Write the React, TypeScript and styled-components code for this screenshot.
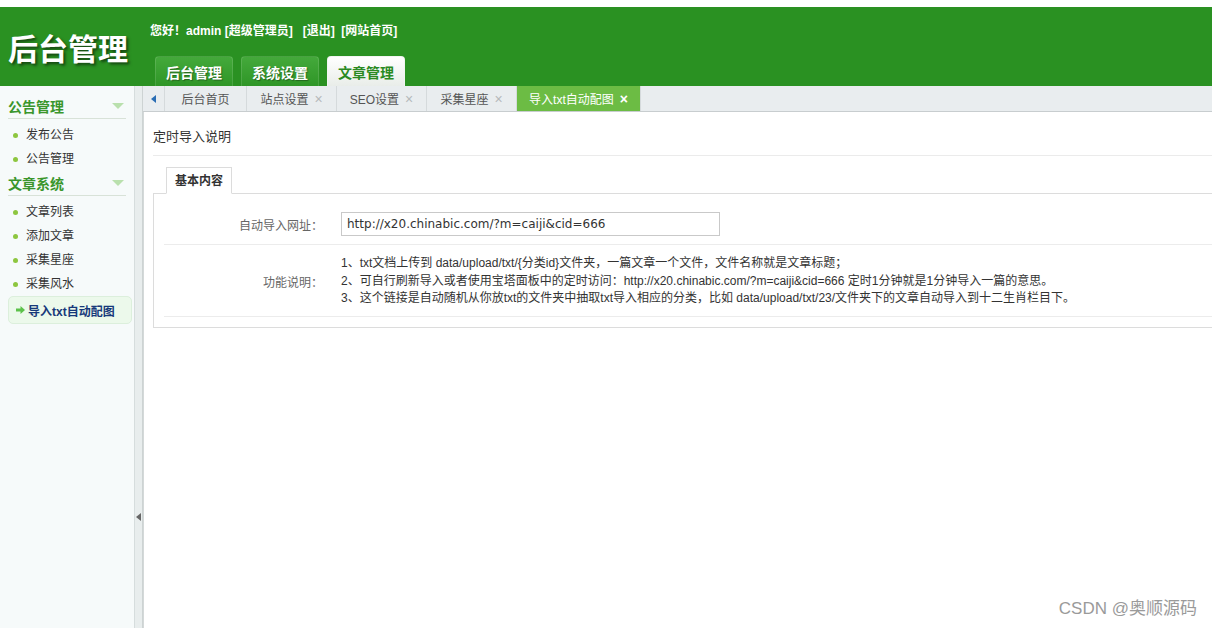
import React, { ReactElement } from "react";
import styled, { createGlobalStyle } from "styled-components";

const GlobalStyle = createGlobalStyle`
  html, body {
    margin: 0;
    padding: 0;
    height: 100%;
    overflow: hidden;
    font-family: "Liberation Sans", "Noto Sans CJK SC", sans-serif;
    font-size: 12px;
    color: #333;
  }
  * { box-sizing: border-box; }
`;

const Page = styled.div`
  height: 628px;
  padding-top: 7px;
  display: flex;
  flex-direction: column;
  background: #fff;
  position: relative;
`;

const Header = styled.div`
  height: 79px;
  background: #2a9122;
  display: flex;
  flex-shrink: 0;
`;

const Logo = styled.div`
  width: 150px;
  padding-left: 8px;
  display: flex;
  align-items: center;
  color: #fff;
  font-family: "Noto Sans CJK SC", sans-serif;
  font-weight: 700;
  font-size: 30px;
  text-shadow: 2px 2px 3px rgba(0, 0, 0, 0.55);
`;

const HeaderRight = styled.div`
  display: flex;
  flex-direction: column;
  justify-content: space-between;
`;

const Greeting = styled.div`
  padding-top: 17px;
  line-height: 14px;
  color: #fff;
  font-weight: 700;
  font-size: 12px;
  white-space: pre;
`;

const NavTabs = styled.div`
  display: flex;
  gap: 8px;
  padding-left: 5px;
`;

const NavTab = styled.div<{ active?: boolean }>`
  width: 78px;
  height: 30px;
  line-height: 31px;
  text-align: center;
  font-family: "Noto Sans CJK SC", sans-serif;
  font-weight: 700;
  font-size: 14px;
  border-radius: 4px 4px 0 0;
  color: ${({ active }) => (active ? "#2a8a22" : "#fff")};
  background: ${({ active }) =>
    active
      ? "linear-gradient(#ffffff, #e9ede9)"
      : "linear-gradient(#44a93b, #2f9627)"};
  border: 1px solid
    ${({ active }) => (active ? "#f2f5f2" : "rgba(255,255,255,0.12)")};
  border-bottom: none;
  text-shadow: ${({ active }) =>
    active ? "none" : "1px 1px 1px rgba(0,0,0,0.35)"};
`;

const Body = styled.div`
  flex: 1;
  display: flex;
  min-height: 0;
`;

const Sidebar = styled.div`
  width: 134px;
  background: #f6fafa;
  padding-top: 8px;
  flex-shrink: 0;
`;

const GroupTitle = styled.div`
  margin: 0 8px;
  height: 25px;
  line-height: 24px;
  border-bottom: 1px solid #d8e2d8;
  font-family: "Noto Sans CJK SC", sans-serif;
  font-weight: 700;
  font-size: 14px;
  color: #3a962c;
  display: flex;
  justify-content: space-between;
  align-items: center;
  padding-right: 2px;
`;

const DownArrow = styled.span`
  width: 0;
  height: 0;
  border-left: 6px solid transparent;
  border-right: 6px solid transparent;
  border-top: 6px solid #b9e0ad;
`;

const MenuList = styled.div`
  padding-top: 4px;
`;

const MenuItem = styled.div`
  height: 24px;
  line-height: 24px;
  padding-left: 26px;
  position: relative;
  color: #333;
  &::before {
    content: "";
    position: absolute;
    left: 13px;
    top: 10px;
    width: 5px;
    height: 5px;
    border-radius: 50%;
    background: #8dc63f;
  }
`;

const ActiveItem = styled.div`
  margin: 0 2px 0 8px;
  height: 28px;
  border: 1px solid #dcefdc;
  border-radius: 5px;
  background: #ecf9eb;
  display: flex;
  align-items: center;
  gap: 3px;
  padding-left: 7px;
  color: #17397a;
  font-weight: 700;
  font-size: 12px;
`;

const Splitter = styled.div`
  width: 9px;
  background: #e8eded;
  border-left: 1px solid #d6dddd;
  border-right: 1px solid #cdd3d3;
  padding-top: 427px;
  display: flex;
  justify-content: center;
  flex-shrink: 0;
`;

const LeftArrow = styled.span<{ color: string }>`
  width: 0;
  height: 0;
  border-top: 4px solid transparent;
  border-bottom: 4px solid transparent;
  border-right: 5px solid ${({ color }) => color};
`;

const Main = styled.div`
  flex: 1;
  display: flex;
  flex-direction: column;
  min-width: 0;
  overflow: hidden;
`;

const TabBar = styled.div`
  height: 26px;
  background: #e9edef;
  border-bottom: 1px solid #c8cdcf;
  display: flex;
  flex-shrink: 0;
`;

const TabArrowCell = styled.div`
  width: 22px;
  border-right: 1px solid #d5dadc;
  display: flex;
  align-items: center;
  justify-content: center;
`;

const PageTab = styled.div<{ active?: boolean; w: number }>`
  width: ${({ w }) => w}px;
  border-right: 1px solid #d5dadc;
  display: flex;
  align-items: center;
  justify-content: center;
  gap: 6px;
  font-size: 12px;
  color: ${({ active }) => (active ? "#fff" : "#555")};
  background: ${({ active }) => (active ? "#6cbc44" : "transparent")};
`;

const Close = styled.span<{ active?: boolean }>`
  font-size: 14px;
  line-height: 14px;
  font-weight: ${({ active }) => (active ? 700 : 400)};
  color: ${({ active }) => (active ? "#fff" : "#b5b9bb")};
`;

const Content = styled.div`
  flex: 1;
  background: #fff;
  border-left: 1px solid #d4d9d9;
  padding: 0 0 0 9px;
`;

const Title = styled.div`
  padding: 15px 0 8px;
  line-height: 20px;
  font-size: 13px;
  color: #333;
  border-bottom: 1px solid #ebebeb;
`;

const TabHead = styled.div`
  margin-top: 11px;
  padding-left: 13px;
  display: flex;
`;

const BoxTab = styled.div`
  width: 66px;
  height: 27px;
  line-height: 26px;
  text-align: center;
  border: 1px solid #dcdcdc;
  border-bottom: 1px solid #fff;
  background: #fff;
  font-weight: 700;
  font-size: 12px;
  color: #333;
  margin-bottom: -1px;
  position: relative;
`;

const Box = styled.div`
  border: 1px solid #dcdcdc;
  border-right: none;
  padding: 0 0 10px 10px;
`;

const FormRow = styled.div<{ pad: string }>`
  display: flex;
  align-items: center;
  padding: ${({ pad }) => pad};
  border-bottom: 1px solid #ececec;
`;

const Label = styled.div`
  width: 159px;
  text-align: right;
  color: #666;
  font-size: 12px;
  flex-shrink: 0;
`;

const Value = styled.div`
  padding-left: 18px;
`;

const TextInput = styled.input`
  width: 379px;
  height: 24px;
  border: 1px solid #c9c9c9;
  padding: 0 5px;
  font-family: "DejaVu Sans", sans-serif;
  font-size: 12px;
  color: #333;
  outline: none;
`;

const Desc = styled.div`
  line-height: 17.5px;
  font-size: 12px;
  color: #333;
  white-space: nowrap;
`;

const Watermark = styled.div`
  position: absolute;
  right: 15px;
  bottom: 9px;
  font-size: 17px;
  color: #9a9a9a;
`;

const ArrowIcon = (): ReactElement => (
  <svg width="9" height="8" viewBox="0 0 9 8">
    <path d="M0 2.5h4.5V0L9 4 4.5 8V5.5H0z" fill="#5cc24a" />
  </svg>
);

const App: React.FC = (): ReactElement => {
  const tabs = [
    { label: "站点设置", w: 90 },
    { label: "SEO设置", w: 90 },
    { label: "采集星座", w: 90 },
  ];

  return (
    <>
      <GlobalStyle />
      <Page>
        <Header>
          <Logo>后台管理</Logo>
          <HeaderRight>
            <Greeting>{"您好！admin [超级管理员]   [退出]  [网站首页]"}</Greeting>
            <NavTabs>
              <NavTab>后台管理</NavTab>
              <NavTab>系统设置</NavTab>
              <NavTab active>文章管理</NavTab>
            </NavTabs>
          </HeaderRight>
        </Header>
        <Body>
          <Sidebar>
            <GroupTitle>
              公告管理
              <DownArrow />
            </GroupTitle>
            <MenuList>
              <MenuItem>发布公告</MenuItem>
              <MenuItem>公告管理</MenuItem>
            </MenuList>
            <GroupTitle>
              文章系统
              <DownArrow />
            </GroupTitle>
            <MenuList>
              <MenuItem>文章列表</MenuItem>
              <MenuItem>添加文章</MenuItem>
              <MenuItem>采集星座</MenuItem>
              <MenuItem>采集风水</MenuItem>
            </MenuList>
            <ActiveItem>
              <ArrowIcon />
              导入txt自动配图
            </ActiveItem>
          </Sidebar>
          <Splitter>
            <LeftArrow color="#666" />
          </Splitter>
          <Main>
            <TabBar>
              <TabArrowCell>
                <LeftArrow color="#2a6db4" />
              </TabArrowCell>
              <PageTab w={82}>后台首页</PageTab>
              {tabs.map((t) => (
                <PageTab key={t.label} w={t.w}>
                  {t.label}
                  <Close>×</Close>
                </PageTab>
              ))}
              <PageTab w={124} active>
                导入txt自动配图
                <Close active>×</Close>
              </PageTab>
            </TabBar>
            <Content>
              <Title>定时导入说明</Title>
              <TabHead>
                <BoxTab>基本内容</BoxTab>
              </TabHead>
              <Box>
                <FormRow pad="18px 0 8px">
                  <Label>自动导入网址：</Label>
                  <Value>
                    <TextInput
                      defaultValue="http://x20.chinabic.com/?m=caiji&cid=666"
                    />
                  </Value>
                </FormRow>
                <FormRow pad="10px 0 8px">
                  <Label>功能说明：</Label>
                  <Value>
                    <Desc>
                      1、txt文档上传到 data/upload/txt/{"{"}分类id{"}"}文件夹，一篇文章一个文件，文件名称就是文章标题；
                    </Desc>
                    <Desc>
                      2、可自行刷新导入或者使用宝塔面板中的定时访问：http://x20.chinabic.com/?m=caiji&amp;cid=666 定时1分钟就是1分钟导入一篇的意思。
                    </Desc>
                    <Desc>
                      3、这个链接是自动随机从你放txt的文件夹中抽取txt导入相应的分类，比如 data/upload/txt/23/文件夹下的文章自动导入到十二生肖栏目下。
                    </Desc>
                  </Value>
                </FormRow>
              </Box>
            </Content>
          </Main>
        </Body>
        <Watermark>CSDN @奥顺源码</Watermark>
      </Page>
    </>
  );
};

export default App;
